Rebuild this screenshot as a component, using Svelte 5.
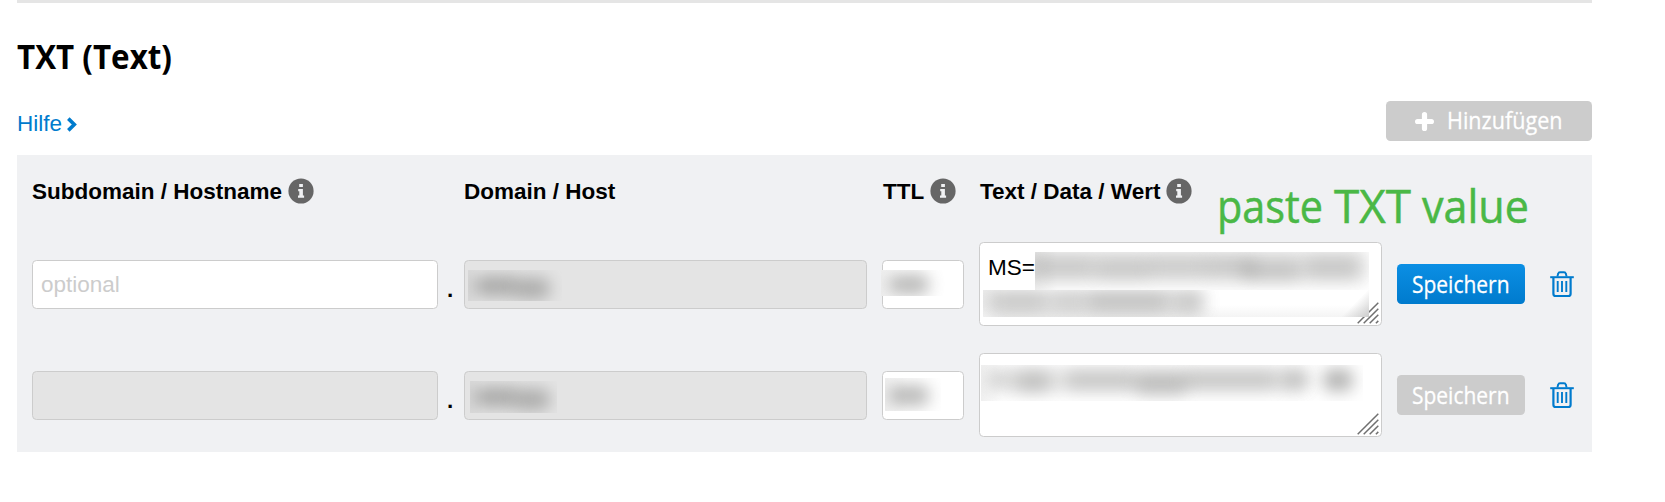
<script>
  const rows = [
    {
      placeholder: 'optional', locked: false, prefix: 'MS=', active: true,
      domain: { x: 3, y: 9, w: 94, h: 31, blobs: [[6, 6, 44, 20, 0.5], [46, 8, 36, 21, 0.48]] },
      ttl: { x: -2, y: 9, w: 66, h: 26, blobs: [[8, 4, 40, 21, 0.48]] },
      text: [
        { x: 55, y: 9, w: 334, h: 38, blobs: [[-8, -3, 340, 34, 0.2], [-6, 6, 66, 18, 0.22], [60, 7, 56, 19, 0.22], [112, 6, 60, 17, 0.2], [168, 6, 54, 17, 0.24], [206, 9, 60, 19, 0.26], [270, 6, 54, 19, 0.24]] },
        { x: 3, y: 47, w: 386, h: 27, corner: true, blobs: [[4, -2, 218, 28, 0.2], [10, 2, 54, 19, 0.22], [68, 3, 36, 17, 0.18], [104, 2, 82, 19, 0.28], [190, 3, 30, 18, 0.24]] }
      ]
    },
    {
      placeholder: '', locked: true, prefix: '', active: false,
      domain: { x: 5, y: 9, w: 87, h: 32, blobs: [[4, 6, 44, 20, 0.5], [44, 8, 36, 21, 0.48]] },
      ttl: { x: 2, y: 6, w: 56, h: 33, blobs: [[4, 7, 40, 21, 0.48]] },
      text: [
        { x: 1, y: 11, w: 382, h: 36, blobs: [[6, 3, 320, 24, 0.18], [10, 6, 20, 16, 0.16], [34, 6, 36, 21, 0.3], [84, 6, 72, 18, 0.26], [154, 8, 52, 22, 0.34], [202, 6, 94, 17, 0.27], [300, 5, 28, 19, 0.3], [342, 4, 30, 22, 0.52]] }
      ]
    }
  ];
</script>

{#snippet info()}
  <svg class="info" width="26" height="26" viewBox="0 0 26 26">
    <circle cx="13" cy="13" r="12.6" fill="#666" />
    <path fill="#f0f1f3" d="M11.200 5.900h3.700v3.200h-3.700zM10.200 11h4.700v6.600h1.200v2.200H10v-2.200h1.300v-4.400h-1.100z" />
  </svg>
{/snippet}

{#snippet smear(s)}
  <span class="smear" class:corner={s.corner} style="left:{s.x}px;top:{s.y}px;width:{s.w}px;height:{s.h}px">
    {#each s.blobs as b}
      <i style="left:{b[0]}px;top:{b[1]}px;width:{b[2]}px;height:{b[3]}px;opacity:{b[4]}"></i>
    {/each}
  </span>
{/snippet}

<main>
  <h2><svg width="160" height="44"><text x="0" y="34" textLength="155" lengthAdjust="spacingAndGlyphs">TXT (Text)</text></svg></h2>
  <div class="bar">
    <a href="#hilfe">Hilfe<svg width="10" height="15" viewBox="0 0 10 15"><path d="M1.3 1.600 7.300 7.500l-6 5.900" fill="none" stroke="#007bcd" stroke-width="3.600" /></svg></a>
    <button class="add">
      <svg width="19" height="19" viewBox="0 0 19 19"><path d="M9.5 2.600v13.800M2.600 9.500h13.800" stroke="#fff" stroke-width="5.2" stroke-linecap="round" /></svg>
      <svg class="label" width="118" height="38"><text x="0" y="27" textLength="115.500" lengthAdjust="spacingAndGlyphs">Hinzufügen</text></svg>
    </button>
  </div>

  <section>
    <div class="grid head">
      <b>Subdomain / Hostname{@render info()}</b>
      <span></span>
      <b>Domain / Host</b>
      <b class="shift">TTL{@render info()}</b>
      <b class="shift">Text / Data / Wert{@render info()}</b>
      <svg class="note" width="320" height="60">
        <text x="0" y="45" textLength="106" lengthAdjust="spacingAndGlyphs">paste</text>
        <text x="117" y="45" textLength="77" lengthAdjust="spacingAndGlyphs">TXT</text>
        <text x="205" y="45" textLength="107" lengthAdjust="spacingAndGlyphs">value</text>
      </svg>
    </div>
    {#each rows as r}
      <div class="grid row">
        <div class="field" class:locked={r.locked}>{r.placeholder}</div>
        <span class="dot">.</span>
        <div class="field locked">{@render smear(r.domain)}</div>
        <div class="field ttl">{@render smear(r.ttl)}</div>
        <div class="field area">
          {r.prefix}
          <svg class="grip" width="22" height="22" viewBox="0 0 22 22"><path d="M.7 21.3 21.3.7M6.7 21.3 21.3 6.7M12.7 21.3l8.6-8.6M18.9 21.3l2.4-2.4" stroke="#707070" stroke-width="1.5" /></svg>
          {#each r.text as t}{@render smear(t)}{/each}
        </div>
        <button class="save" class:active={r.active}>
          <svg class="label" width="98" height="38"><text x="0" y="27.500" textLength="97.5" lengthAdjust="spacingAndGlyphs">Speichern</text></svg>
        </button>
        <svg class="trash" width="24" height="27" viewBox="0 0 24 27" fill="none" stroke="#007bcd">
          <path d="M.2 6.2h23.6" stroke-width="2" />
          <path d="M7.4 5.6 8.2 2.6Q8.5 1.2 10 1.2h4q1.500 0 1.800 1.400l.8 3" stroke-width="1.900" />
          <path d="M3.400 7v15.700q0 2.300 2.300 2.300h12.600q2.300 0 2.300-2.300V7" stroke-width="2.200" />
          <path d="M7.700 10v11M12 10v11M16.300 10v11" stroke-width="1.900" />
        </svg>
      </div>
    {/each}
  </section>
</main>

<style>
  :global(body) { background: #fff; }
  main {
    box-sizing: border-box;
    margin-left: 17px;
    width: 1575px;
    border-top: 3px solid #e5e5e5;
    font: 22.5px/27px "Liberation Sans", Arial, sans-serif;
    color: #000;
  }
  svg { display: block; flex: none; overflow: visible; }
  h2 { margin: 0; padding-top: 32px; height: 44px; }
  h2 text { font: 700 34.5px "Open Sans", sans-serif; }
  .bar { display: flex; justify-content: space-between; align-items: flex-start; padding-top: 22px; height: 54px; }
  a { display: flex; align-items: center; gap: 5px; margin-top: 9px; color: #007bcd; text-decoration: none; }
  a svg { margin-top: 2px; }
  button {
    display: flex;
    align-items: center;
    justify-content: center;
    height: 40px;
    padding: 0;
    border: 0;
    border-radius: 4.5px;
    background: #ccc;
  }
  .label text { font: 400 23.5px "Open Sans", sans-serif; fill: #fff; stroke: #fff; stroke-width: .3px; }
  .add { width: 206px; gap: 13px; padding-left: 2px; }
  section { height: 297px; background: #f0f1f3; }
  .grid {
    display: grid;
    grid-template-columns: 406px 26px 418px 97px 418px 153px 24px;
    padding-left: 15px;
  }
  .head { position: relative; height: 87px; }
  .head b { display: flex; align-items: center; height: 26px; margin-top: 23px; gap: 6px; white-space: nowrap; }
  .head .shift { padding-left: 1px; }
  .note { position: absolute; left: 1200px; top: 23px; }
  .note text { font: 400 46px "Open Sans", sans-serif; fill: #4ab846; stroke: #4ab846; stroke-width: .5px; }
  .row { align-items: center; height: 84px; margin-bottom: 27px; }
  .field {
    position: relative;
    box-sizing: border-box;
    height: 49px;
    padding: 10px 8px;
    border: 1px solid #ccc;
    border-radius: 4.5px;
    background: #fff;
    color: #ccc;
  }
  .locked { background: #e4e4e4; }
  .dot + .field, .area { margin-right: 15px; }
  .ttl { margin-right: 15px; }
  .area { height: 84px; padding-top: 11px; color: #000; }
  .dot { padding-left: 9px; font-weight: 700; margin-top: 10px; }
  .grip { position: absolute; right: 2px; bottom: 1px; }
  .smear { position: absolute; overflow: hidden; background: linear-gradient(90deg, #0000000c, transparent 14px); }
  .ttl .smear, .area .smear { background: linear-gradient(90deg, #f0f0f0, #fff 22px); }
  .area .corner { background: linear-gradient(315deg, #ccc, #fff0 20px), linear-gradient(0deg, #f4f4f4, #fff0 12px), linear-gradient(90deg, #eee, #fff 22px); }
  .smear i { position: absolute; border-radius: 8px; background: #70706e; filter: blur(8px); }
  .save { width: 128px; }
  .active { background: linear-gradient(#0b8fe4, #007bcd); }
</style>
